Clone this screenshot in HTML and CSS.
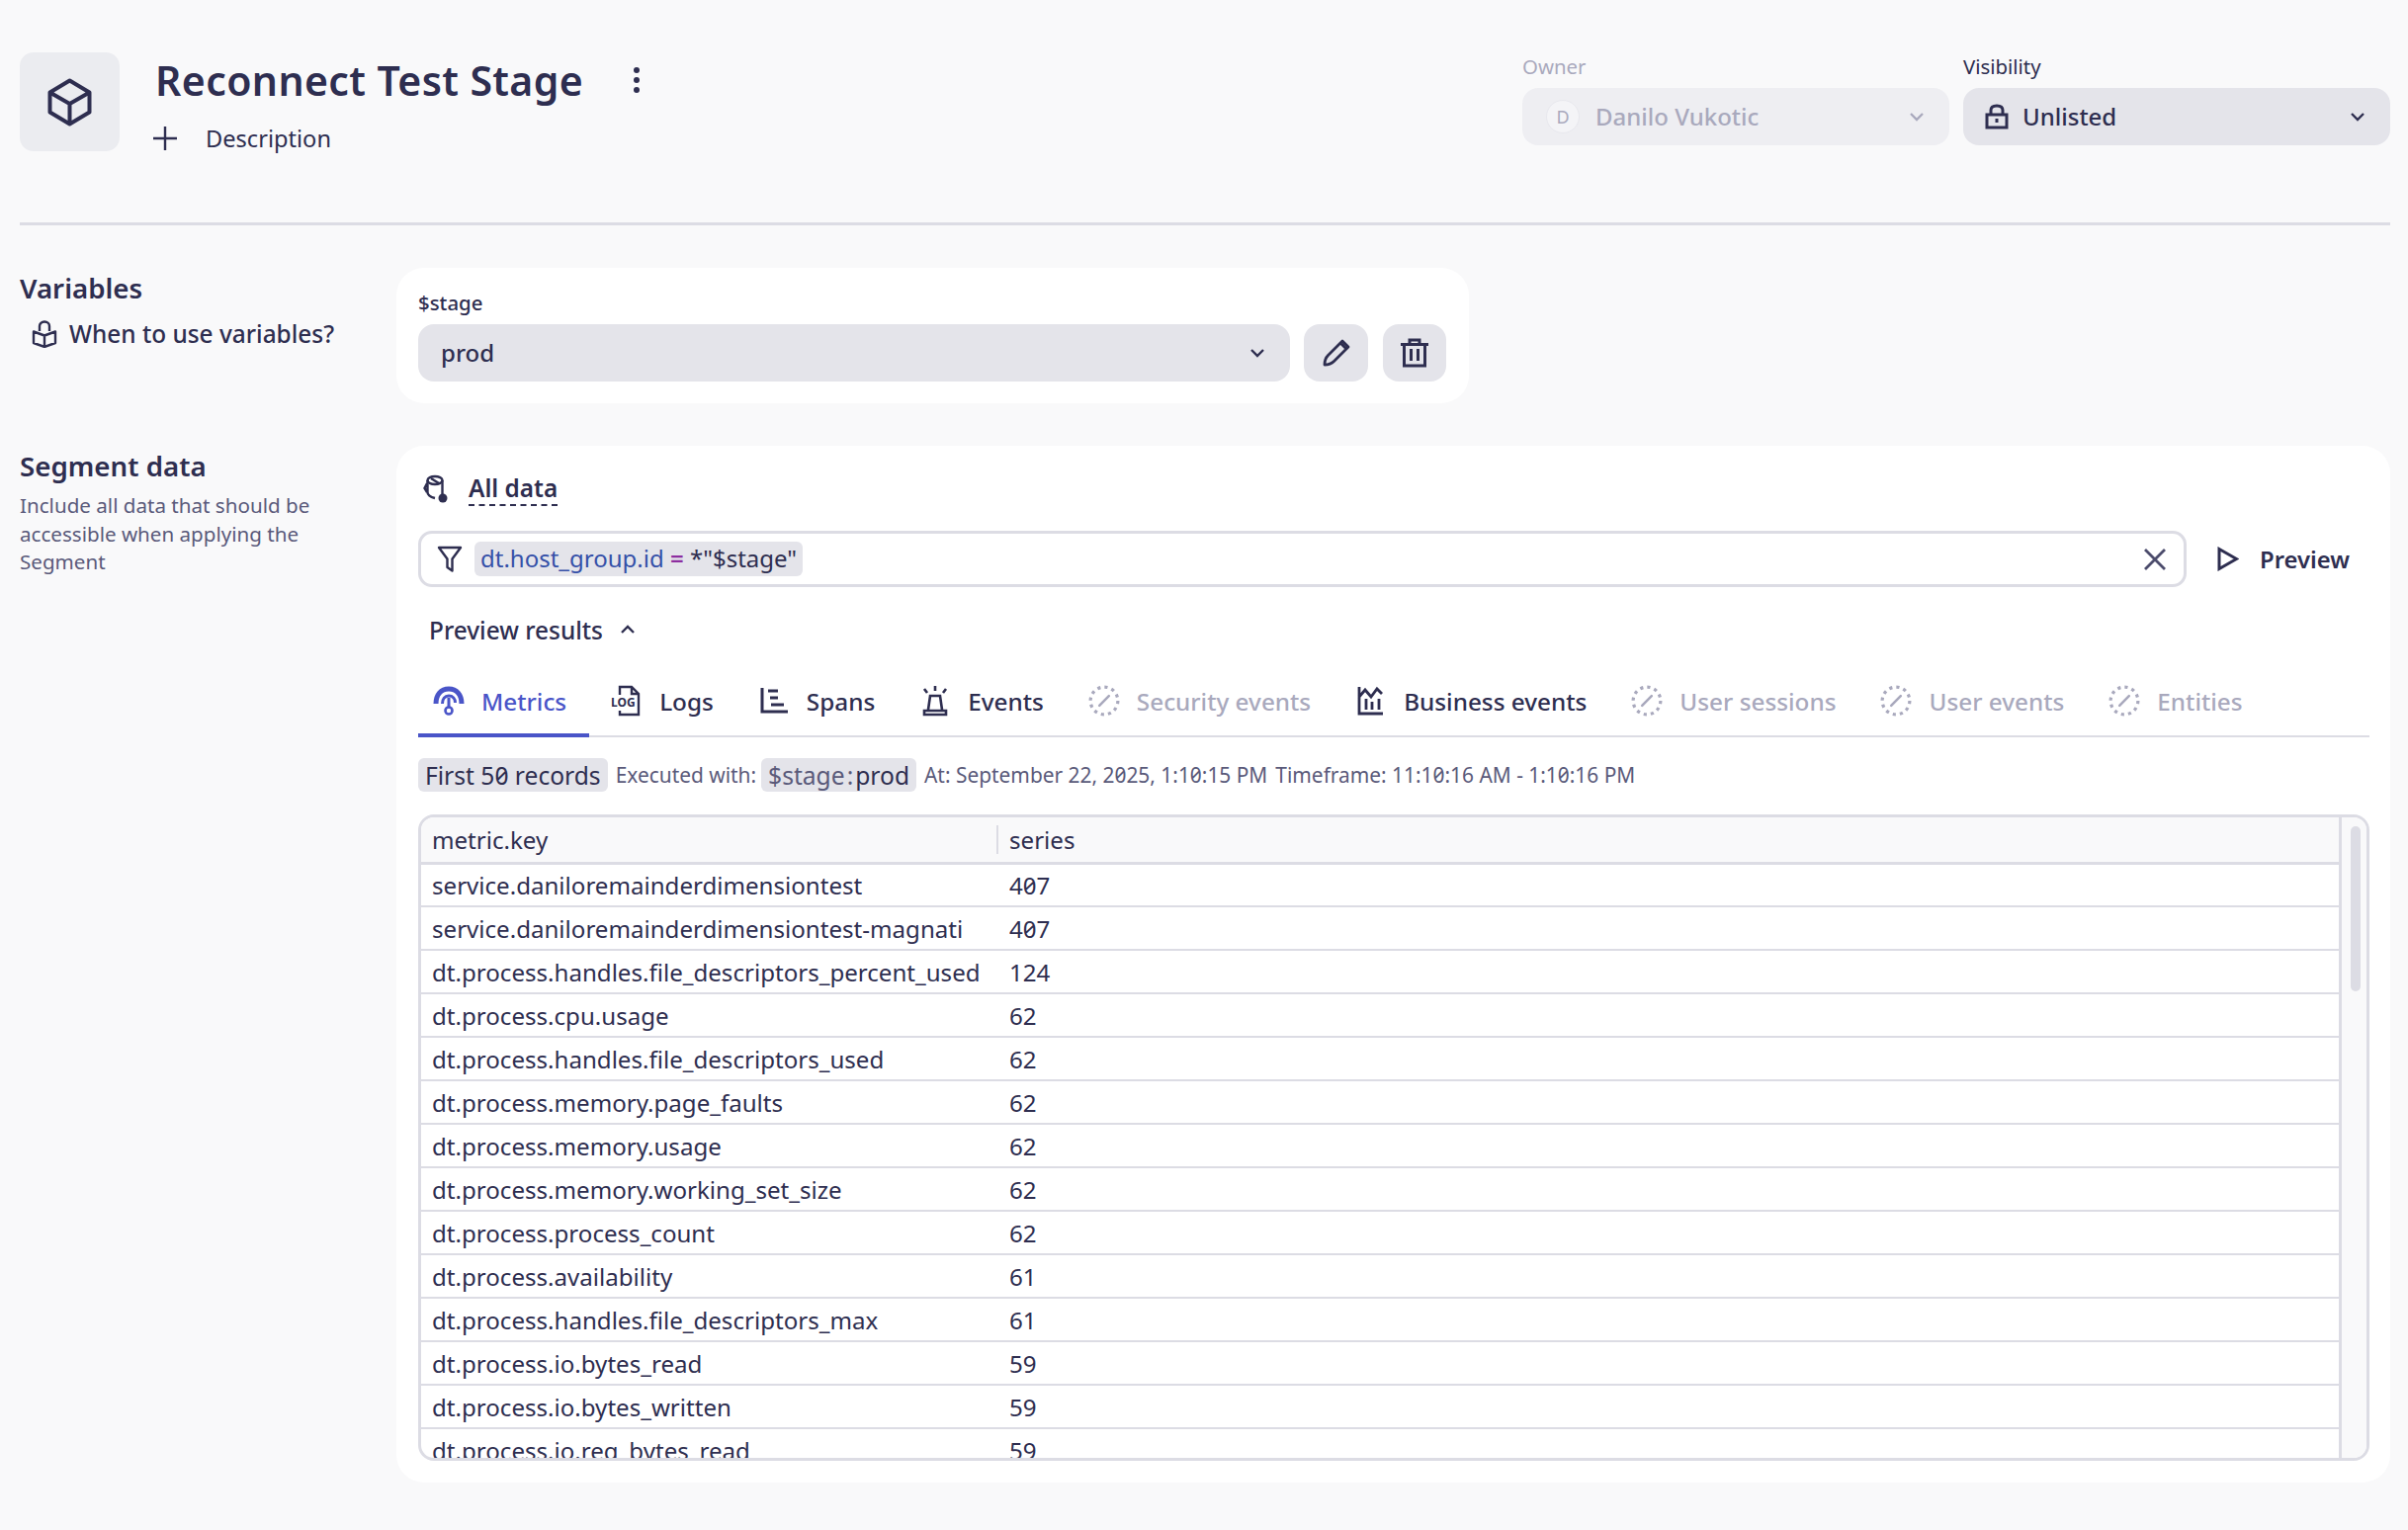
FILE: index.html
```html
<!DOCTYPE html>
<html lang="en">
<head>
    <meta charset="UTF-8">
    <meta name="viewport" content="width=device-width, initial-scale=1.0">
    <title>Reconnect Test Stage</title>
    <link rel="stylesheet" href="styles.css">
</head>
<body>
    <svg class="sprites" width="0" height="0">
        <symbol id="i-chevron" viewBox="0 0 16 10"><path d="M2 2l6 6 6-6" fill="none" stroke="currentColor" stroke-width="2.4"/></symbol>
        <symbol id="i-pending" viewBox="0 0 30 30"><circle cx="15" cy="15" r="13" fill="none" stroke="currentColor" stroke-width="3" stroke-dasharray="3 3.8"/><path d="M10.5 19.5l9-9" fill="none" stroke="currentColor" stroke-width="2.4" stroke-linecap="round"/></symbol>
    </svg>

    <div class="page">
        <!-- Header -->
        <header class="header">
            <div class="header-left">
                <div class="app-tile">
                    <svg class="cube" viewBox="0 0 45 49"><path d="M22.5 2.500L42.500 14.500V34.500L22.500 46.500L2.500 34.500V14.500Z M2.500 14.500L22.500 26L42.500 14.500 M22.500 26V46" fill="none" stroke="currentColor" stroke-width="4" stroke-linejoin="round"/></svg>
                </div>
                <div class="title-block">
                    <div class="title-row">
                        <h1>Reconnect Test Stage</h1>
                        <svg class="kebab" viewBox="0 0 8 28"><circle cx="4" cy="4" r="3"/><circle cx="4" cy="14" r="3"/><circle cx="4" cy="24" r="3"/></svg>
                    </div>
                    <div class="desc-row">
                        <svg class="plus" viewBox="0 0 24 24"><path d="M12 0V24M0 12H24" stroke="currentColor" stroke-width="2.400"/></svg>
                        <span>Description</span>
                    </div>
                </div>
            </div>
            <div class="header-right">
                <div class="field field-disabled">
                    <label>Owner</label>
                    <div class="select select-owner">
                        <span class="avatar">D</span>
                        <span class="select-text">Danilo Vukotic</span>
                        <svg class="chevron"><use href="#i-chevron"/></svg>
                    </div>
                </div>
                <div class="field">
                    <label>Visibility</label>
                    <div class="select">
                        <svg class="lock" viewBox="0 0 24 26"><path d="M2 11H22V24H2Z M6 11V6.500C6 3.500 8.500 2 12 2S18 3.500 18 6.500V11" fill="none" stroke="currentColor" stroke-width="3"/><path d="M12 15V19" stroke="currentColor" stroke-width="3"/></svg>
                        <span class="select-text">Unlisted</span>
                        <svg class="chevron"><use href="#i-chevron"/></svg>
                    </div>
                </div>
            </div>
        </header>

        <!-- Variables -->
        <section class="section section-vars">
            <div class="side">
                <h2>Variables</h2>
                <div class="help-link">
                    <svg class="book" viewBox="0 0 26 28"><path d="M2 11.500L13 15.500L24 11.500V23L13 27L2 23Z M13 15.500V27 M8 11V6C8 3.500 10 1.500 13 1.500S18 3.500 18 6V11" fill="none" stroke="currentColor" stroke-width="2.400" stroke-linejoin="round"/></svg>
                    <span>When to use variables?</span>
                </div>
            </div>
            <div class="card card-vars">
                <label class="var-label">$stage</label>
                <div class="var-row">
                    <div class="select select-var">
                        <span class="select-text">prod</span>
                        <svg class="chevron"><use href="#i-chevron"/></svg>
                    </div>
                    <button class="icon-btn">
                        <svg viewBox="0 0 30 30"><path d="M3 27C3 22 5 19 6.500 17.500L21 3L27 9L12.500 23.500C11 25 8 27 3 27Z M19 5L25 11" fill="none" stroke="currentColor" stroke-width="2.800" stroke-linejoin="round"/></svg>
                    </button>
                    <button class="icon-btn icon-btn-trash">
                        <svg viewBox="0 0 30 30"><path d="M1 6.500H29 M4.500 6.500V28H25.500V6.500 M10 6V2H20V6 M11.500 11V23 M18.500 11V23" fill="none" stroke="currentColor" stroke-width="3"/></svg>
                    </button>
                </div>
            </div>
        </section>

        <!-- Segment data -->
        <section class="section section-data">
            <div class="side">
                <h2>Segment data</h2>
                <p class="side-text">Include all data that should be accessible when applying the Segment</p>
            </div>
            <div class="card card-data">
                <div class="source-row">
                    <svg class="source-icon" viewBox="0 0 26 30"><ellipse cx="12" cy="6" rx="7.500" ry="4" fill="none" stroke="currentColor" stroke-width="2.400"/><path d="M4.500 6V18C4.500 21 8 23 12 24M19.500 6V20M4 9L1.500 14L4 18M8 4L16 9" fill="none" stroke="currentColor" stroke-width="2.400"/><circle cx="20" cy="24" r="4.500" fill="currentColor"/></svg>
                    <span class="source-name">All data</span>
                </div>
                <div class="query-row">
                    <div class="query-input">
                        <svg class="funnel" viewBox="0 0 26 28"><path d="M2 2H24L15.500 13.500V25.500L10.500 22V13.500Z" fill="none" stroke="currentColor" stroke-width="2.400" stroke-linejoin="round"/></svg>
                        <span class="query-chip"><span class="q-key">dt.host_group.id</span> <span class="q-op">=</span> *"$stage"</span>
                        <svg class="clear" viewBox="0 0 22 22"><path d="M1 1L21 21M21 1L1 21" stroke="currentColor" stroke-width="2.800"/></svg>
                    </div>
                    <div class="preview-btn">
                        <svg class="play" viewBox="0 0 22 25"><path d="M2 2.500L19.500 12.500L2 22.500Z" fill="none" stroke="currentColor" stroke-width="3"/></svg>
                        <span>Preview</span>
                    </div>
                </div>
                <div class="preview-toggle">
                    <span>Preview results</span>
                    <svg class="chevron chevron-up"><use href="#i-chevron"/></svg>
                </div>

                <div class="tabs">
                    <div class="tab tab-active">
                        <svg viewBox="0 0 32 32"><path d="M3 19C3 10 8 4 16 4S29 10 29 19" fill="none" stroke="currentColor" stroke-width="5"/><path d="M9.500 19C9.500 14 12 11 16 11S22.500 14 22.500 18" fill="none" stroke="currentColor" stroke-width="3"/><path d="M16 13V23" stroke="currentColor" stroke-width="3"/><circle cx="16" cy="26" r="3.500" fill="none" stroke="currentColor" stroke-width="2.600"/></svg>
                        <span>Metrics</span>
                    </div>
                    <div class="tab">
                        <svg viewBox="0 0 32 32"><path d="M9 10V2H21L28 9V30H9V26 M21 2V9H28" fill="none" stroke="currentColor" stroke-width="2.400"/><text class="log-mark" x="0" y="22">LOG</text></svg>
                        <span>Logs</span>
                    </div>
                    <div class="tab">
                        <svg viewBox="0 0 32 32"><path d="M4 3V27H30 M10 6H20 M12 13H20 M13 20H26" fill="none" stroke="currentColor" stroke-width="3"/></svg>
                        <span>Spans</span>
                    </div>
                    <div class="tab">
                        <svg viewBox="0 0 32 32"><path d="M9 25L11 11H21L23 25 M5 26H27V30H5Z M16 1V6 M5 4L8 8 M27 4L24 8" fill="none" stroke="currentColor" stroke-width="2.600"/></svg>
                        <span>Events</span>
                    </div>
                    <div class="tab tab-off">
                        <svg><use href="#i-pending"/></svg>
                        <span>Security events</span>
                    </div>
                    <div class="tab">
                        <svg viewBox="0 0 32 32"><path d="M4 2V29H28 M4 12L10 5L16 12L22 4L27 9 M11 14V25 M17 17V25 M24 14V25" fill="none" stroke="currentColor" stroke-width="2.800"/></svg>
                        <span>Business events</span>
                    </div>
                    <div class="tab tab-off">
                        <svg><use href="#i-pending"/></svg>
                        <span>User sessions</span>
                    </div>
                    <div class="tab tab-off">
                        <svg><use href="#i-pending"/></svg>
                        <span>User events</span>
                    </div>
                    <div class="tab tab-off">
                        <svg><use href="#i-pending"/></svg>
                        <span>Entities</span>
                    </div>
                </div>

                <div class="info-row">
                    <span class="tag tag-count">First 50 records</span>
                    <span>Executed with:</span>
                    <span class="tag tag-var">$stage<span class="tag-sep">:</span><b>prod</b></span>
                    <span>At: September 22, 2025, 1:10:15 PM</span>
                    <span>Timeframe: 11:10:16 AM - 1:10:16 PM</span>
                </div>

                <div class="results">
                    <div class="results-main">
                        <table>
                            <thead>
                                <tr><th class="col-key">metric.key</th><th>series</th></tr>
                            </thead>
                            <tbody>
                                <tr><td>service.daniloremainderdimensiontest</td><td>407</td></tr>
                                <tr><td>service.daniloremainderdimensiontest-magnati</td><td>407</td></tr>
                                <tr><td>dt.process.handles.file_descriptors_percent_used</td><td>124</td></tr>
                                <tr><td>dt.process.cpu.usage</td><td>62</td></tr>
                                <tr><td>dt.process.handles.file_descriptors_used</td><td>62</td></tr>
                                <tr><td>dt.process.memory.page_faults</td><td>62</td></tr>
                                <tr><td>dt.process.memory.usage</td><td>62</td></tr>
                                <tr><td>dt.process.memory.working_set_size</td><td>62</td></tr>
                                <tr><td>dt.process.process_count</td><td>62</td></tr>
                                <tr><td>dt.process.availability</td><td>61</td></tr>
                                <tr><td>dt.process.handles.file_descriptors_max</td><td>61</td></tr>
                                <tr><td>dt.process.io.bytes_read</td><td>59</td></tr>
                                <tr><td>dt.process.io.bytes_written</td><td>59</td></tr>
                                <tr><td>dt.process.io.req_bytes_read</td><td>59</td></tr>
                            </tbody>
                        </table>
                    </div>
                    <div class="scroll-gutter"><div class="scroll-thumb"></div></div>
                </div>
            </div>
        </section>
    </div>
</body>
</html>
```

FILE: styles.css
```css
* {
    box-sizing: border-box;
}
html, body {
    margin: 0;
    height: 100%;
}
body {
    font-family: "Noto Sans", "Open Sans", sans-serif;
    font-size: 24.1px;
    color: #2e2e50;
    background-color: #f9f9fa;
    font-variant-numeric: slashed-zero;
    overflow: hidden;
}
.sprites {
    position: absolute;
}
.page {
    padding: 53px 18px 0 20px;
}

/* header */
.header {
    display: flex;
    justify-content: space-between;
    height: 175px;
    border-bottom: 3px solid #dcdce4;
}
.header-left {
    display: flex;
    gap: 37px;
}
.app-tile {
    width: 101px;
    height: 100px;
    display: flex;
    align-items: center;
    justify-content: center;
    background-color: #ebecf0;
    border-radius: 14px;
}
.cube {
    width: 45px;
    height: 49px;
}
.title-row {
    display: flex;
    align-items: center;
    gap: 50px;
    height: 56px;
}
h1 {
    margin: 0;
    font-size: 41px;
    font-weight: 600;
    line-height: 56px;
    letter-spacing: 0.4px;
    margin-left: -1px;
}
.kebab {
    width: 8px;
    height: 28px;
    fill: currentColor;
}
.desc-row {
    display: flex;
    align-items: center;
    gap: 29px;
    height: 36px;
    margin-top: 13px;
    margin-left: -3px;
    font-size: 23.6px;
}
.plus {
    width: 24px;
    height: 24px;
}
.header-right {
    display: flex;
    gap: 14px;
}
.field {
    width: 432px;
}
.field label {
    display: block;
    font-size: 20.400px;
    line-height: 28px;
    margin-bottom: 8px;
}
.field-disabled {
    color: #a9a9bd;
}
.select {
    display: flex;
    align-items: center;
    height: 58px;
    padding: 0 25px 0 22px;
    background-color: #e4e4ea;
    border-radius: 16px;
    font-size: 24px;
    font-weight: 500;
}
.select-text {
    flex: 1;
    padding-bottom: 2px;
}
.select-owner {
    background-color: #eeeef2;
    padding-left: 24px;
}
.avatar {
    width: 34px;
    height: 34px;
    margin-right: 16px;
    display: flex;
    align-items: center;
    justify-content: center;
    border: 1px solid #e8e8ee;
    background-color: #f4f4f7;
    border-radius: 50%;
    font-size: 18px;
    font-weight: 400;
}
.lock {
    width: 24px;
    height: 26px;
    margin-right: 14px;
}
.chevron {
    width: 16px;
    height: 10px;
}
.chevron-up {
    transform: rotate(180deg);
}

/* sections */
.section {
    display: grid;
    grid-template-columns: 381px 1fr;
}
.section-vars {
    margin-top: 43px;
}
.section-data {
    margin-top: 43px;
}
h2 {
    margin: 0;
    font-size: 27.700px;
    font-weight: 600;
    line-height: 38px;
}
.help-link {
    display: flex;
    align-items: center;
    gap: 12px;
    margin-top: 11px;
    margin-left: 12px;
    font-size: 24.400px;
    font-weight: 500;
}
.book {
    width: 26px;
    height: 28px;
}
.side {
    padding-top: 1px;
}
.side-text {
    width: 320px;
    margin: 7px 0 0;
    font-size: 20.600px;
    line-height: 28.500px;
    color: #5a5a7a;
}
.card {
    background-color: #fff;
    border-radius: 28px;
    padding: 22px 21px 22px 22px;
}

/* variables card */
.card-vars {
    width: 1085px;
    padding-top: 21px;
}
.var-label {
    display: block;
    font-size: 20.400px;
    line-height: 28px;
    margin-bottom: 8px;
    font-weight: 500;
}
.var-row {
    display: flex;
}
.select-var {
    width: 882px;
    padding-left: 23px;
}
.icon-btn {
    width: 65px;
    height: 58px;
    margin-left: 14px;
    display: flex;
    align-items: center;
    justify-content: center;
    padding: 0;
    border: none;
    background-color: #e4e4ea;
    border-radius: 16px;
    color: #2e2e50;
}
.icon-btn svg {
    width: 30px;
    height: 30px;
}
.icon-btn-trash {
    width: 64px;
    margin-left: 15px;
}

/* segment card */
.source-row {
    display: flex;
    align-items: center;
    gap: 20px;
    height: 43px;
    padding-left: 5px;
}
.source-icon {
    width: 26px;
    height: 30px;
}
.source-name {
    font-weight: 600;
    font-size: 24.400px;
    line-height: 32px;
    border-bottom: 2px dashed #2e2e50;
}
.query-row {
    display: flex;
    align-items: center;
    margin-top: 21px;
}
.query-input {
    display: flex;
    align-items: center;
    width: 1789px;
    height: 57px;
    padding: 0 18px 0 16px;
    border: 3px solid #dcdce4;
    border-radius: 14px;
}
.funnel {
    width: 26px;
    height: 28px;
    margin-right: 12px;
}
.query-chip {
    height: 35px;
    padding: 0 6px;
    background-color: #e4e4ea;
    border-radius: 6px;
    font-size: 24px;
    line-height: 34px;
}
.q-key {
    color: #3550a8;
}
.q-op {
    color: #8d2ea0;
    font-weight: 600;
}
.clear {
    width: 22px;
    height: 22px;
    margin-left: auto;
    color: #4c4c6c;
}
.preview-btn {
    display: flex;
    align-items: center;
    gap: 21px;
    margin-left: 31px;
    font-size: 23.800px;
    font-weight: 600;
}
.play {
    width: 22px;
    height: 25px;
}
.preview-toggle {
    display: flex;
    align-items: center;
    gap: 17px;
    height: 44px;
    margin-top: 21px;
    padding-left: 11px;
    font-size: 24.400px;
    font-weight: 500;
}

/* tabs */
.tabs {
    display: flex;
    gap: 7px;
    height: 87px;
    padding-top: 13px;
    border-bottom: 2px solid #dcdce4;
}
.tab {
    display: flex;
    align-items: center;
    gap: 17px;
    height: 74px;
    padding: 0 23px 0 15px;
    font-size: 24.300px;
    font-weight: 500;
}
.tab svg {
    width: 32px;
    height: 32px;
    flex: none;
}
.tab-active {
    color: #4a55c8;
    padding-top: 4px;
    border-bottom: 4px solid #4a55c8;
}
.tab-off {
    color: #a9a9bd;
}
.log-mark {
    font-size: 12px;
    font-weight: 700;
    fill: currentColor;
}

/* execution info */
.info-row {
    display: flex;
    align-items: center;
    gap: 8px;
    height: 34px;
    margin-top: 21px;
    font-size: 20.900px;
    color: #5a5a7a;
}
.tag {
    height: 34px;
    padding: 0 7px;
    background-color: #e4e4ea;
    border-radius: 6px;
    font-size: 24.600px;
    line-height: 35px;
    color: #2e2e50;
}
.tag-var {
    margin-left: -3px;
    color: #5a5a7a;
}
.tag-sep {
    padding: 0 2px;
}
.tag-var b {
    font-weight: 400;
    color: #2e2e50;
}

/* results table */
.results {
    display: flex;
    height: 654px;
    margin-top: 23px;
    border: 3px solid #dcdce4;
    border-radius: 16px;
    overflow: hidden;
}
.results-main {
    flex: 1;
    overflow: hidden;
}
table {
    width: 100%;
    table-layout: fixed;
    border-collapse: collapse;
}
th {
    height: 46px;
    padding: 0 0 0 11px;
    text-align: left;
    font-weight: 400;
    background-color: #f9f9fa;
    border-bottom: 3px solid #dcdce4;
    position: relative;
}
th.col-key {
    width: 584px;
    padding-left: 11px;
}
th.col-key::after {
    content: "";
    position: absolute;
    right: 0;
    top: 8px;
    bottom: 8px;
    width: 2px;
    background-color: #dcdce4;
}
td {
    height: 44px;
    padding: 0 0 0 11px;
    border-bottom: 2px solid #dcdce4;
    white-space: nowrap;
}
.scroll-gutter {
    width: 28px;
    flex: none;
    padding: 9px 0 0 9px;
    background-color: #f9f9fa;
    border-left: 3px solid #dcdce4;
}
.scroll-thumb {
    width: 10px;
    height: 167px;
    background-color: #dcdce4;
    border-radius: 5px;
}
```
